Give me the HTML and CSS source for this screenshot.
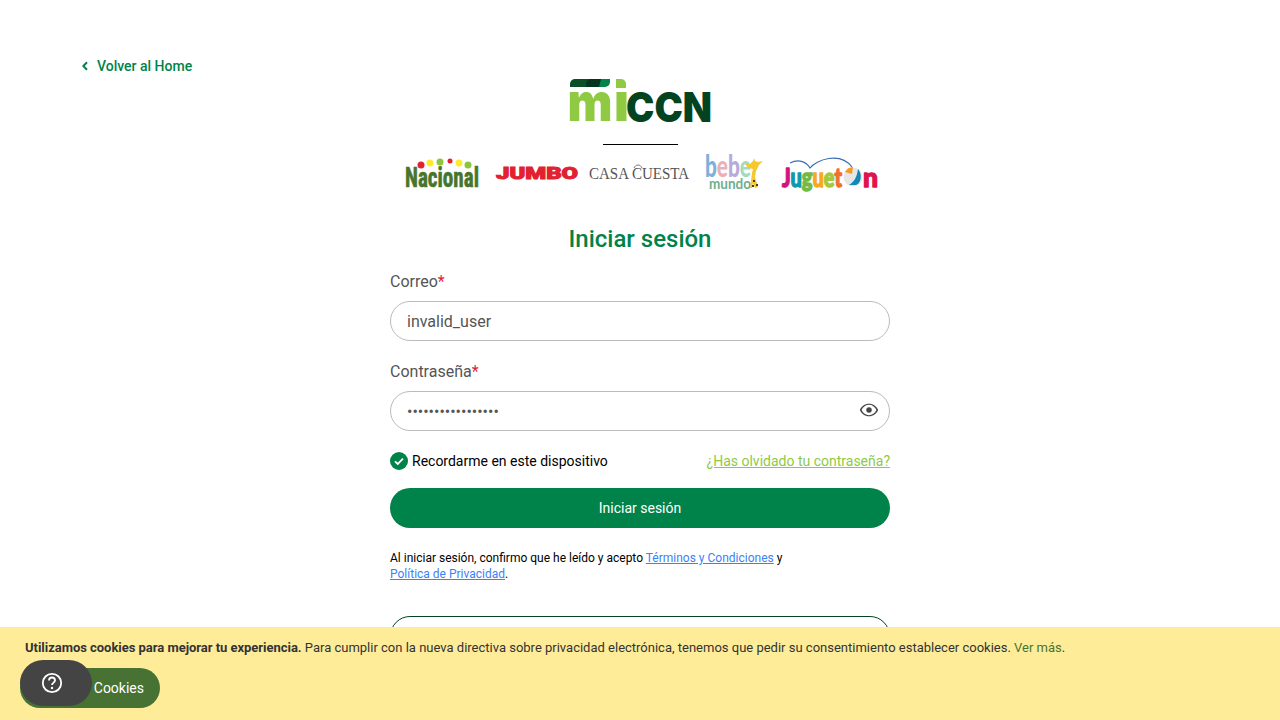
FILE: index.html
```html
<!DOCTYPE html>
<html lang="es">
<head>
<meta charset="utf-8">
<title>Iniciar sesión</title>
<link rel="stylesheet" href="styles.css">
</head>
<body>
<div class="page">
  <a class="back" href="#">
    <svg class="back-icon" viewBox="0 0 8 10" width="8" height="10"><path d="M5 1.300 1.300 5 5 8.700" fill="none" stroke="#00834a" stroke-width="2"/></svg>
    <span>Volver al Home</span>
  </a>
  <main class="col">
    <div class="logos">
      <svg class="miccn" viewBox="0 0 142 44" width="142" height="44">
        <path class="bar-dark" d="M1 5a5 5 0 0 1 5-5h24v3a5 5 0 0 1-5 5H1z"/>
        <path class="bar-darker" d="M17 5a5 5 0 0 1 5-5h16v3a5 5 0 0 1-5 5H17z"/>
        <path class="bar-mid" d="M32 0h9v3a5 5 0 0 1-5 5h-6z"/>
        <path class="logo-lime" d="M47 0h5a5 5 0 0 1 5 5v4H47z"/>
        <text class="mi" x="-1.500" y="42" textLength="45" lengthAdjust="spacingAndGlyphs">m</text>
        <text class="mi" x="45" y="42" textLength="15" lengthAdjust="spacingAndGlyphs">ı</text>
        <text class="ccn" x="57" y="42.500" textLength="86" lengthAdjust="spacingAndGlyphs">CCN</text>
      </svg>
      <div class="rule"></div>
      <svg class="brands" viewBox="0 0 480 40" width="480" height="40">
        <g>
          <circle class="red" cx="17" cy="14" r="3.500"/><circle class="yel" cx="26" cy="12" r="3.500"/><circle class="lim" cx="36" cy="11" r="3.500"/><circle class="red" cx="46" cy="10" r="2.500"/><circle class="yel" cx="55" cy="12" r="3.500"/><circle class="lim" cx="64" cy="14" r="3.500"/>
          <text class="nacional" x="1" y="36" textLength="74" lengthAdjust="spacingAndGlyphs">Nacional</text>
        </g>
        <text class="jumbo" x="92" y="28" textLength="82" lengthAdjust="spacingAndGlyphs">JUMBO</text>
        <g>
          <text class="cuesta" x="185" y="28" textLength="100" lengthAdjust="spacingAndGlyphs">CASA CUESTA</text>
          <path class="arc-thin" d="M230 17c1-2 2-3 4-3s3 1 4 3"/>
        </g>
        <g>
          <text class="bebe" x="301" y="26" textLength="46" lengthAdjust="spacingAndGlyphs"><tspan class="b1">b</tspan><tspan class="b2">e</tspan><tspan class="b3">b</tspan><tspan class="b4">e</tspan></text>
          <text class="mundo" x="305" y="38" textLength="42" lengthAdjust="spacingAndGlyphs">mundo</text>
          <path class="giraffe" d="M346 37l2-15 1-4-5-1-3-4 5 0 3-3 1-3 1 3 3 1 5-1-4 4-3 6-1 6 3 10-3 1-2-5-1 5z"/>
          <path class="giraffe-d" d="M349 29h2v2h-2zM352 33h2v2h-2zM348 34h2v2h-2z"/>
        </g>
        <g>
          <path class="arc" d="M386 12C394 8 402 10 406 17 412 9 436 0 448 16"/>
          <text class="jug" x="378" y="36" textLength="60" lengthAdjust="spacingAndGlyphs"><tspan class="j1">J</tspan><tspan class="j2">u</tspan><tspan class="j3">g</tspan><tspan class="j4">u</tspan><tspan class="j5">e</tspan><tspan class="j6">t</tspan></text>
          <circle class="ball" cx="449" cy="26" r="9.500"/>
          <path class="ball-o" d="M441 21a9.500 9.500 0 0 1 8-5l-1 7z"/>
          <path class="ball-b" d="M445 34c5-3 8-8 9-16 4 4 4 14-2 16z"/>
          <text class="jug j7" x="459" y="36" textLength="15" lengthAdjust="spacingAndGlyphs">n</text>
        </g>
      </svg>
    </div>

    <h1 class="title">Iniciar sesión</h1>

    <form class="form">
      <div class="field">
        <label class="label">Correo<span class="req">*</span></label>
        <div class="input"><span>invalid_user</span></div>
      </div>
      <div class="field">
        <label class="label">Contraseña<span class="req">*</span></label>
        <div class="input">
          <span class="dots">•••••••••••••••••</span>
          <svg class="eye" viewBox="0 0 24 24" width="20" height="20"><path d="M12 4.500C7 4.500 2.730 7.610 1 12c1.730 4.390 6 7.500 11 7.500s9.270-3.110 11-7.500c-1.730-4.390-6-7.500-11-7.500zm0 13.700c-3.800 0-7.170-2.350-8.900-6.200C4.830 8.150 8.200 5.800 12 5.800s7.170 2.350 8.900 6.200c-1.730 3.850-5.100 6.200-8.900 6.200z"/><circle cx="12" cy="12" r="3.300"/></svg>
        </div>
      </div>
      <div class="options">
        <div class="remember">
          <svg viewBox="0 0 18 18" width="18" height="18"><circle cx="9" cy="9" r="9" fill="#00834a"/><path d="M5 9.300l2.800 2.700L13 6.700" fill="none" stroke="#fff" stroke-width="1.800"/></svg>
          <span>Recordarme en este dispositivo</span>
        </div>
        <a class="forgot" href="#">¿Has olvidado tu contraseña?</a>
      </div>
      <button class="submit" type="button">Iniciar sesión</button>
      <p class="legal">Al iniciar sesión, confirmo que he leído y acepto <a href="#">Términos y Condiciones</a> y<br><a href="#">Política de Privacidad</a>.</p>
      <div class="secondary"></div>
    </form>
  </main>
</div>

<div class="cookies">
  <p class="cookie-text"><strong>Utilizamos cookies para mejorar tu experiencia.</strong> Para cumplir con la nueva directiva sobre privacidad electrónica, tenemos que pedir su consentimiento establecer cookies. <a href="#">Ver más</a>.</p>
  <button class="cookie-btn" type="button">Cookies</button>
  <div class="help">
    <svg viewBox="0 0 24 24" width="24" height="24"><circle cx="12" cy="12" r="9.200" fill="none" stroke="#fff" stroke-width="1.800"/><path d="M9 9.500a3 3 0 0 1 6 0c0 2-3 2.300-3 4.600" fill="none" stroke="#fff" stroke-width="1.800"/><circle cx="12" cy="17" r="1.200" fill="#fff"/></svg>
  </div>
</div>
</body>
</html>
```
FILE: styles.css
```css
* { box-sizing: border-box; }
html, body { margin: 0; height: 720px; overflow: hidden; background: #fff; }
body { font-family: Roboto, "Liberation Sans", sans-serif; color: #000; }
a { text-decoration: none; }

.page { height: 720px; overflow: hidden; position: relative; padding-top: 79px; }
.back { display: inline-flex; align-items: center; gap: 7px; color: #00834a; font-size: 14px; font-weight: 500; line-height: 18px; position: absolute; left: 82px; top: 57px; }
.back-icon { display: block; }

.col { width: 500px; margin: 0 auto; display: flex; flex-direction: column; }
.logos { display: flex; flex-direction: column; align-items: center; }
.miccn { display: block; overflow: visible; }
.bar-dark { fill: #0a4f28; }
.bar-darker { fill: #06331c; }
.bar-mid { fill: #00834a; }
.logo-lime { fill: #8fca42; }
.mi { font: 900 53px Inter, sans-serif; fill: #8fca42; }
.ccn { font: 900 41px Inter, sans-serif; fill: #04431f; }
.rule { width: 75px; height: 1px; background: #000; margin-top: 21px; }
.brands { display: block; margin: 6px 0 0 8px; width: 480px; overflow: visible; }
.red { fill: #e8202e; }
.yel { fill: #fcea2b; }
.lim { fill: #8cc63f; }
.nacional { font: 700 27px "Liberation Sans Narrow", "Roboto Condensed", Roboto, sans-serif; fill: #47752c; stroke: #47752c; stroke-width: .6px; }
.jumbo { font: 900 17px Roboto, sans-serif; fill: #e2202f; stroke: #e2202f; stroke-width: 1px; }
.cuesta { font: 400 17px "Liberation Serif", serif; fill: #555; }
.arc-thin { fill: none; stroke: #555; stroke-width: .8; }
.bebe { font: 900 31px Lato, sans-serif; }
.b1 { fill: #7fb0d8; }
.b2 { fill: #eab0b8; }
.b3 { fill: #b5aadb; }
.b4 { fill: #9fdcc0; }
.mundo { font: 700 15px Lato, sans-serif; fill: #6fae8f; }
.giraffe { fill: #f5c92e; }
.giraffe-d { fill: #4a3a20; }
.arc { fill: none; stroke: #3a6eb5; stroke-width: 1.200; }
.jug { font: 900 27px Lato, sans-serif; stroke-width: 1.400px; stroke-linejoin: round; }
.j1 { fill: #d6127f; stroke: #d6127f; }
.j2 { fill: #0b9bb0; stroke: #0b9bb0; }
.j3 { fill: #74b944; stroke: #74b944; }
.j4 { fill: #f7a823; stroke: #f7a823; }
.j5 { fill: #a5c93a; stroke: #a5c93a; }
.j6 { fill: #f36f2c; stroke: #f36f2c; }
.j7 { fill: #e0144c; stroke: #e0144c; }
.ball { fill: #e6e6e6; }
.ball-o { fill: #f59a23; }
.ball-b { fill: #1188b8; }

.title { margin: 32px 0 0; text-align: center; font-size: 24px; line-height: 32px; font-weight: 500; color: #00834a; }
.form { display: flex; flex-direction: column; margin-top: 14px; }
.field { display: flex; flex-direction: column; margin-bottom: 18px; }
.label { font-size: 16px; line-height: 26px; color: #555; margin-bottom: 6px; }
.req { color: #e8202e; }
.input { height: 40px; border: 1px solid #bbb; border-radius: 20px; padding: 0 10px 0 16px; display: flex; align-items: center; justify-content: space-between; font-size: 16px; color: #555; }
.dots { font-size: 16px; color: #555; }
.eye { fill: #444; display: block; margin-bottom: 2px; }
.options { display: flex; justify-content: space-between; align-items: center; height: 20px; margin-top: 2px; }
.remember { display: flex; align-items: center; gap: 4px; font-size: 14px; }
.remember svg { display: block; }
.forgot { font-size: 14px; color: #8fca42; text-decoration: underline; }
.submit { margin-top: 17px; height: 40px; border: 0; border-radius: 20px; background: #00834a; color: #fff; font: 400 14px Roboto, sans-serif; }
.legal { margin: 22px 0 0; font-size: 12px; line-height: 16px; }
.legal a { color: #3b82f6; text-decoration: underline; }
.secondary { margin-top: 34px; height: 40px; border: 1px solid #04431f; border-radius: 20px; }

.cookies { position: fixed; left: 0; right: 0; bottom: 0; height: 93px; background: #ffec99; padding: 12px 25px 0; }
.cookie-text { margin: 0; font-size: 13px; line-height: 17px; color: #333; }
.cookie-text strong { letter-spacing: -.03px; }
.cookie-text a { color: #47752f; }
.cookie-btn { position: absolute; left: 20px; top: 41px; width: 140px; height: 40px; border: 0; border-radius: 20px; background: #477234; color: #fff; font: 400 14px Roboto, sans-serif; padding: 0 16px 0 0; text-align: right; }
.help { position: absolute; left: 20px; top: 33px; width: 72px; height: 46px; padding-right: 8px; border-radius: 23px; background: #444; display: flex; align-items: center; justify-content: center; }
.help svg { display: block; }
```
